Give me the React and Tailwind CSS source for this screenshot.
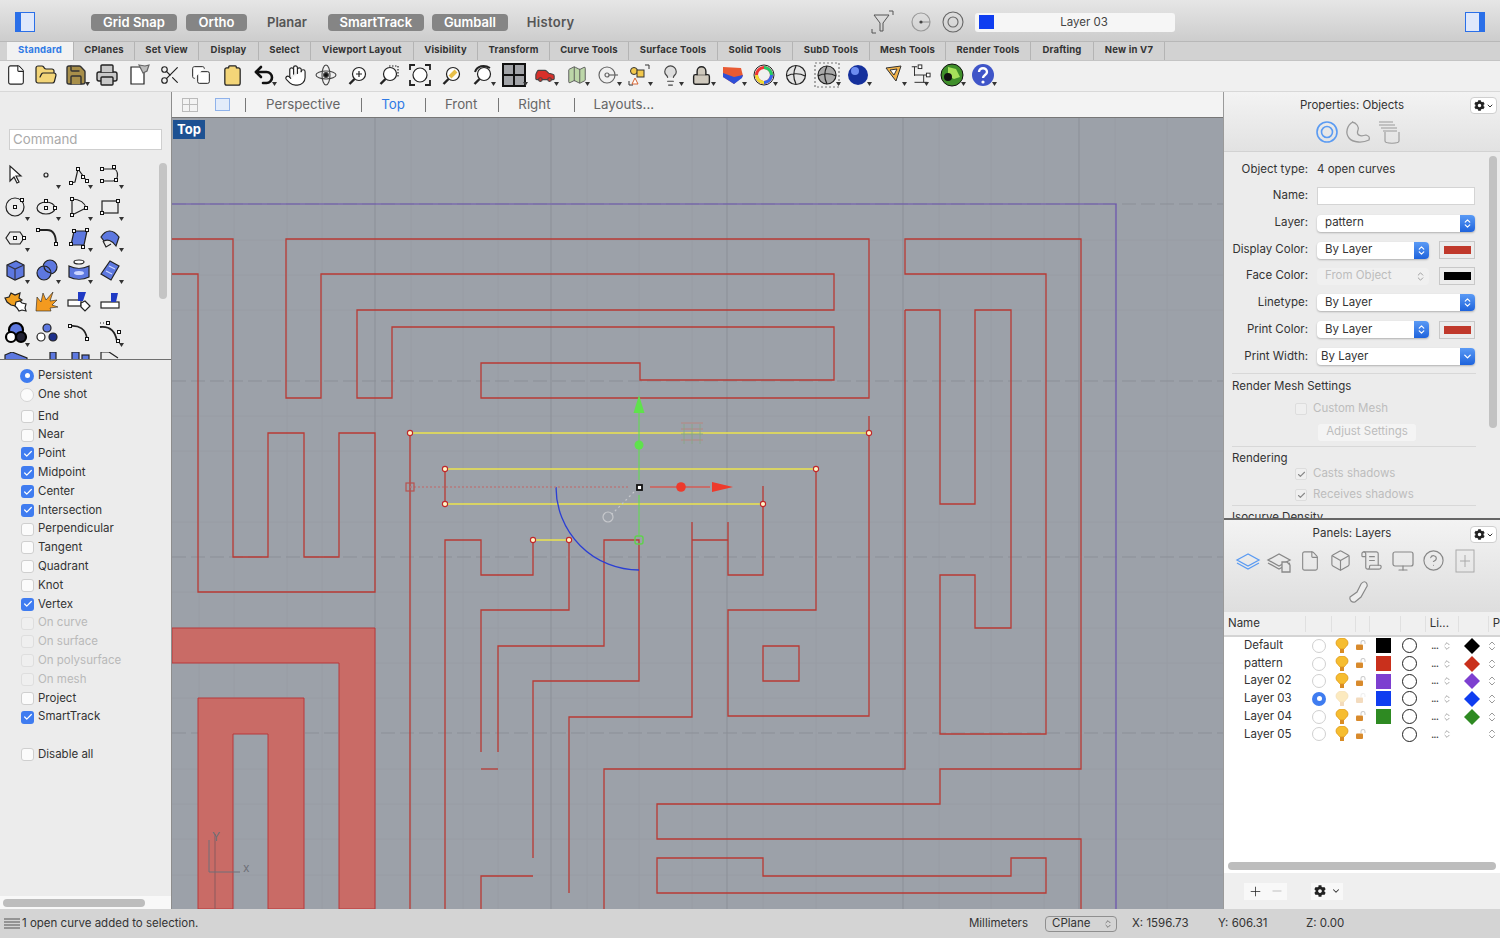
import {
  File, FolderOpen, Save, Printer, Scissors, Copy, Clipboard, Undo2, Hand, Lightbulb, Lock,
  Car, Map as MapIcon, Box, Monitor, CircleHelp, ScrollText, Plus, Minus, ChevronDown, Check, ChevronsUpDown,
} from "lucide-react";
import { FaCog } from "react-icons/fa";

const TABS = [
  ["Standard", "w-[67px]"], ["CPlanes", "w-[61px]"], ["Set View", "w-[64px]"], ["Display", "w-[60px]"],
  ["Select", "w-[52px]"], ["Viewport Layout", "w-[103px]"], ["Visibility", "w-[64px]"], ["Transform", "w-[72px]"],
  ["Curve Tools", "w-[79px]"], ["Surface Tools", "w-[89px]"], ["Solid Tools", "w-[75px]"], ["SubD Tools", "w-[77px]"],
  ["Mesh Tools", "w-[76px]"], ["Render Tools", "w-[85px]"], ["Drafting", "w-[63px]"], ["New in V7", "w-[71px]"],
];

const OSNAPS = [
  ["End", 0], ["Near", 0], ["Point", 1], ["Midpoint", 1], ["Center", 1], ["Intersection", 1], ["Perpendicular", 0],
  ["Tangent", 0], ["Quadrant", 0], ["Knot", 0], ["Vertex", 1], ["On curve", 2], ["On surface", 2], ["On polysurface", 2],
  ["On mesh", 2], ["Project", 0], ["SmartTrack", 1],
];

const LAYERS = [
  { name: "Default", color: "bg-[#000000]", fill: "#000000" },
  { name: "pattern", color: "bg-[#c9301c]", fill: "#c9301c" },
  { name: "Layer 02", color: "bg-[#7d3fd0]", fill: "#7d3fd0" },
  { name: "Layer 03", color: "bg-[#0f3df0]", fill: "#0f3df0", current: true },
  { name: "Layer 04", color: "bg-[#2e8a22]", fill: "#2e8a22" },
  { name: "Layer 05", color: "bg-transparent", fill: "transparent" },
];

function Flyout() {
  return (
    <svg className="absolute right-[2px] bottom-[2px]" width="5" height="4" viewBox="0 0 5 4">
      <path d="M0 0h5L2.5 4z" fill="#333" />
    </svg>
  );
}

function Tb({ children, fly, className = "w-[31.3px]" }) {
  return (
    <div className={`relative h-[26px] flex items-center justify-center shrink-0 ${className}`}>
      {children}
      {fly ? <Flyout /> : null}
    </div>
  );
}

// zoom tools share the same magnifier, handle pointing down-left
function Mag({ fill = "#fff", children }) {
  return (
    <svg width="24" height="24" viewBox="0 0 24 24" fill="none" stroke="#222" strokeWidth="1.2">
      <circle cx="13" cy="11" r="6.5" fill={fill} />
      <path d="M8.5 16L3.5 21" strokeWidth="2.4" />
      {children}
    </svg>
  );
}

function Pt({ x, y }) {
  return <rect x={x - 1.5} y={y - 1.5} width="3" height="3" fill="#fff" stroke="#111" strokeWidth="1" />;
}

function Tool({ children, fly }) {
  return (
    <div className="relative w-[31.5px] h-[31.5px] flex items-center justify-center">
      <svg width="24" height="24" viewBox="0 0 24 24" fill="none" stroke="#222" strokeWidth="1.2">
        {children}
      </svg>
      {fly ? <Flyout /> : null}
    </div>
  );
}

const BLUE = "#5d78e0";

const TOOLS = [
  [<path key="a" d="M6 3v15l4-4 3 6 2-1-3-6h5z" fill="#fff" />, 0],
  [<circle key="a" cx="11" cy="12" r="2" />, 1],
  [<g key="a"><path d="M4 20l4-1 3-13 8 11" /><Pt x={4} y={20} /><Pt x={11} y={6} /><Pt x={16} y={14} /><Pt x={20} y={18} /></g>, 1],
  [<g key="a"><path d="M4 6h11c6 0 6 12 0 12H4" /><Pt x={4} y={6} /><Pt x={16} y={4} /><Pt x={4} y={18} /><Pt x={18} y={17} /></g>, 1],
  [<g key="a"><circle cx="11" cy="12" r="9" /><Pt x={11} y={12} /><Pt x={18} y={5} /></g>, 1],
  [<g key="a"><ellipse cx="11" cy="13" rx="9" ry="6" /><Pt x={11} y={6} /><Pt x={11} y={13} /><Pt x={20} y={13} /></g>, 1],
  [<g key="a"><path d="M5 4c8 0 13 4 14 9L5 20z" /><Pt x={5} y={4} /><Pt x={19} y={13} /><Pt x={5} y={20} /></g>, 1],
  [<g key="a"><rect x="4" y="6" width="16" height="12" /><Pt x={20} y={6} /><Pt x={4} y={18} /></g>, 1],
  [<g key="a"><path d="M6 6h10l4 6-4 6H6l-4-6z" /><Pt x={11} y={12} /><Pt x={20} y={12} /></g>, 1],
  [<g key="a"><path d="M3 4h9c7 0 9 6 9 14" strokeWidth="1.8" /><Pt x={3} y={4} /><Pt x={21} y={18} /></g>, 0],
  [<g key="a"><path d="M7 5h13l-3 14H4z" fill={BLUE} /><Pt x={7} y={5} /><Pt x={20} y={4} /><Pt x={4} y={18} /><Pt x={16} y={21} /></g>, 1],
  [<g key="a"><path d="M3 11c5-8 12-8 18 0l-3 9C14 14 9 13 6 15z" fill={BLUE} /><path d="M5 15l3 6 5-3" /></g>, 1],
  [<g key="a"><path d="M3 7l9-4 8 4v11l-9 4-8-4z" fill={BLUE} /><path d="M3 7l8 4 9-4M11 11v11" stroke="#334" /></g>, 1],
  [<g key="a"><circle cx="15" cy="9" r="7" fill={BLUE} /><circle cx="9" cy="15" r="7" fill={BLUE} /><path d="M9 8c0 4 2 6 7 7" /></g>, 1],
  [<g key="a"><ellipse cx="12" cy="4" rx="5" ry="2" fill="#fff" /><path d="M2 8c6 3 14 3 20 0v11c-6 3-14 3-20 0z" fill={BLUE} /><ellipse cx="12" cy="15" rx="5" ry="2" fill="#cdd6ff" stroke="none" /></g>, 1],
  [<g key="a"><path d="M3 16L12 3l9 5-8 14z" fill={BLUE} /><path d="M8 13l6 3M11 8l6 3" stroke="#cdd6ff" /></g>, 1],
  [<g key="a"><path d="M1 9l4-1 2-4 4 2 5-2-1 5 3 2-4 3-2 3-5-1-4-3z" fill="#f0a020" /><path d="M12 13l4-1 2 2 4 1-1 4 1 3-4-1-3 1-2-3-2-2z" fill="#fff" /></g>, 0],
  [<path key="a" d="M1 22l1-14 4 5 2-9 3 7 7-8-3 9 7-1-5 5 6 2-8 1 1 3z" fill="#f39a1f" stroke="#222" strokeWidth=".6" />, 0],
  [<g key="a"><rect x="1" y="11" width="13" height="6" fill="#fff" /><path d="M11 3h8l-3 9h-5z" fill="#1f3ac4" stroke="none" /><path d="M14 14l4-2 5 5-5 5-4-4z" fill="#fff" /></g>, 0],
  [<g key="a"><rect x="3" y="13" width="18" height="6" fill="#fff" /><path d="M13 4h7l-2 9h-5z" fill="#1f3ac4" stroke="none" /></g>, 0],
  [<g key="a"><circle cx="12" cy="9" r="7" fill={BLUE} stroke="#000" strokeWidth="2.2" /><circle cx="7" cy="16" r="5" fill="#fff" stroke="#000" strokeWidth="2.2" /><circle cx="17" cy="16" r="5" fill="#223" stroke="#000" strokeWidth="2.2" /></g>, 1],
  [<g key="a"><circle cx="12" cy="7" r="4" fill={BLUE} /><circle cx="6" cy="16" r="4" fill="#fff" /><circle cx="18" cy="16" r="4" fill="#1d2f8a" /></g>, 0],
  [<g key="a"><path d="M3 5c9-1 16 3 17 13" strokeWidth="1.8" /><Pt x={3} y={5} /><Pt x={20} y={18} /></g>, 0],
  [<g key="a"><path d="M2 6c9-1 15 3 17 14" strokeWidth="1.8" /><path d="M2 2h10" strokeDasharray="1 2" /><Pt x={10} y={2} /><Pt x={21} y={11} /><Pt x={20} y={20} /></g>, 1],
  // last row is cut by the divider, only the tops show
  [<path key="a" d="M1 3l7-3 15 6v8H1z" fill={BLUE} />, 0],
  [<rect key="a" x="15" y="0" width="6" height="12" fill={BLUE} />, 0],
  [<g key="a"><rect x="5" y="0" width="7" height="12" fill={BLUE} /><rect x="15" y="3" width="7" height="9" fill={BLUE} /></g>, 0],
  [<path key="a" d="M3 0v12M3 0h8l9 6" fill="none" />, 0],
];

function CheckBox({ state }) {
  if (state === 1) {
    return (
      <span className="w-[13px] h-[13px] rounded-[3px] bg-[#3f7cf0] flex items-center justify-center shrink-0">
        <Check size={10} color="#fff" strokeWidth={3} />
      </span>
    );
  }
  if (state === 2) return <span className="w-[13px] h-[13px] rounded-[3px] bg-[#efefef] border border-[#dedede] shrink-0" />;
  return <span className="w-[13px] h-[13px] rounded-[3px] bg-[#fbfbfb] border border-[#cfcfcf] shrink-0" />;
}

function SnapRow({ label, state, className = "" }) {
  return (
    <div className={`h-[18.8px] flex items-center gap-[4px] pl-[21px] ${className}`}>
      <CheckBox state={state} />
      <span className={state === 2 ? "text-[#b9b9b9]" : "text-[#333]"}>{label}</span>
    </div>
  );
}

function Select({ label, width, dim, arrow, pl = "pl-[8px]" }) {
  return (
    <div className={`h-[17px] flex items-center justify-between rounded-[4px] shadow-[0_1px_2px_rgba(0,0,0,0.25)] ${width} ${dim ? "bg-[#f0f0f0] shadow-none" : "bg-white"}`}>
      <span className={`${pl} ${dim ? "text-[#bdbdbd]" : "text-[#333]"}`}>{label}</span>
      {dim ? (
        <ChevronsUpDown size={11} color="#999" className="mr-[3px]" />
      ) : (
        <span className="w-[15px] h-[17px] rounded-r-[4px] bg-gradient-to-b from-[#5a9af5] to-[#1e63dc] flex items-center justify-center">
          {arrow ? <ChevronDown size={11} color="#fff" strokeWidth={3} /> : <ChevronsUpDown size={11} color="#fff" strokeWidth={2.5} />}
        </span>
      )}
    </div>
  );
}

function Swatch({ color }) {
  return (
    <span className="ml-[10px] w-[36px] h-[18px] bg-[#ececec] border border-[#c8c8c8] flex items-center justify-center">
      <span className={`w-[27px] h-[8px] ${color}`} />
    </span>
  );
}

function PropRow({ label, h, children }) {
  return (
    <div className={`flex items-center ${h}`}>
      <span className="w-[84px] text-right text-[#333]">{label}</span>
      <div className="ml-[9px] flex items-center">{children}</div>
    </div>
  );
}

function GearBtn() {
  return (
    <span className="w-[27px] h-[17px] bg-white rounded-[4px] border border-[#cfcfcf] flex items-center justify-center gap-[1px]">
      <FaCog size={11} color="#222" />
      <ChevronDown size={8} color="#333" strokeWidth={3} />
    </span>
  );
}

function LayersIcon({ color, extra }) {
  return (
    <svg width="26" height="24" viewBox="0 0 26 24" fill="none" stroke={color} strokeWidth="1.3">
      <path d="M13 5L2 11l11 6 11-6z" />
      <path d="M2 14l11 6 11-6" />
      {extra ? <path d="M16 13h5l3 3v7h-8z" fill="#e8e8e8" /> : null}
    </svg>
  );
}

function Bulb() {
  return (
    <svg width="14" height="16" viewBox="0 0 14 16">
      <path d="M1 5a6 5 0 0 1 12 0c0 3-3 4-4 6H5C4 9 1 8 1 5z" fill="#f6bd30" stroke="#e09a1a" strokeWidth=".8" />
      <rect x="5" y="11" width="4" height="4" fill="#d98c24" />
    </svg>
  );
}

function OpenLock() {
  return (
    <svg width="11" height="11" viewBox="0 0 11 11" fill="none">
      <path d="M6 4V2.5a2 2 0 0 1 4 0V4" stroke="#cfcfcf" strokeWidth="1.1" />
      <rect x="1" y="4.5" width="7" height="5.5" rx="1" fill="#d88a2c" />
    </svg>
  );
}

function Mark({ x, y }) {
  return <circle cx={x} cy={y} r="2.6" fill="#fff6c8" stroke="#c0262a" strokeWidth="1.1" />;
}

// maze geometry, in page coordinates
const MAZE = [
  "M172 239H233V557H268V433H304V557H339V433H375V592H198V274H172",
  "M286 239H869V398H481V363H640V380H834V327H392V398H357V310H834V274H321V398H286Z",
  "M410 433V909",
  "M445 469V504",
  "M445 909V540H481V575H533V540",
  "M569 540V610H481V752",
  "M498 752V646H604V540H639V681H533V858",
  "M481 769H498",
  "M481 909V876H533",
  "M569 893V717H692V522",
  "M692 540H728",
  "M728 522V575H763V486",
  "M816 469V610H728V716H869V416",
  "M763 646H799V681H763Z",
  "M905 310H940V504H975V310H1011V628H975V575H940V734H1046V274H905V239H1081V769H940V804H657V839H1081V909",
  "M905 310V769H604V909",
  "M657 858H763V876H1011V858H1046V893H657Z",
];

function Viewport() {
  return (
    <svg className="block w-full h-full" viewBox="172 118 1051 791" preserveAspectRatio="none">
      <rect x="172" y="118" width="1051" height="791" fill="#9ca1a9" />
      {[199, 234, 287, 322, 411, 463, 498, 587, 639, 692, 763, 816, 939, 991, 1044, 1115, 1167].map((x) => (
        <path key={x} d={`M${x} 118V909`} stroke="#989ca4" strokeWidth="1" />
      ))}
      {[240, 275, 310, 416, 451, 522, 592, 628, 663, 698, 769, 804, 839, 875].map((y) => (
        <path key={y} d={`M172 ${y}H1223`} stroke="#989ca4" strokeWidth="1" />
      ))}
      {[375, 551, 727, 903, 1079].map((x) => (
        <path key={x} d={`M${x} 118V909`} stroke="#8b8f97" strokeWidth="1" />
      ))}
      {[204, 381, 557, 733].map((y) => (
        <path key={y} d={`M172 ${y}H1223`} stroke="#8b8f97" strokeWidth="1" strokeDasharray="14 5" />
      ))}
      <path d="M172 628H375V909H339V663H172Z" fill="#c96b66" stroke="#b8393a" strokeWidth="1" />
      <path d="M198 909V698H304V909H268V734H233V909Z" fill="#c96b66" stroke="#b8393a" strokeWidth="1" />
      <path d="M215 834V909" stroke="#8b5a5c" />
      <path d="M209 840V872H240" fill="none" stroke="#6e7078" strokeWidth="1" />
      <text x="212" y="841" fontSize="12" fill="#6e7078">Y</text>
      <text x="243" y="872" fontSize="12" fill="#6e7078">x</text>
      <path d="M172 204H1116V909" fill="none" stroke="#6a52b0" strokeWidth="1.2" />
      {MAZE.map((d) => (
        <path key={d} d={d} fill="none" stroke="#b83a34" strokeWidth="1.3" />
      ))}
      <path d="M410 433H869M445 469H816M445 504H763M533 540H569" stroke="#ece44e" strokeWidth="1.5" />
      <path d="M556 487A83 83 0 0 0 639 570" fill="none" stroke="#2b3fd4" strokeWidth="1.3" />
      <path d="M410 487H630" stroke="#b57a7c" strokeWidth="1.3" strokeDasharray="2 2" />
      <rect x="406" y="483" width="8" height="8" fill="none" stroke="#b8504e" strokeWidth="1.2" />
      <path d="M639 405V480M639 495V535" stroke="#5fe24c" strokeWidth="1" />
      <path d="M639 395l5.5 18h-11z" fill="#5fe24c" />
      <circle cx="639" cy="445" r="4.5" fill="#5fe24c" />
      <rect x="635" y="536" width="8" height="8" rx="2" fill="none" stroke="#5fd24c" strokeWidth="1.4" />
      <path d="M650 487H710" stroke="#ee3a2c" strokeWidth="1.2" />
      <circle cx="681" cy="487" r="4.8" fill="#ee3a2c" />
      <path d="M712 482l21 5-21 5z" fill="#ee3a2c" />
      <rect x="637" y="485" width="5" height="5" fill="#fff" stroke="#111" strokeWidth="1.8" />
      <path d="M634 492L612 514" stroke="#c6c8cc" strokeWidth="1.2" strokeDasharray="2 3" />
      <circle cx="608" cy="517" r="5" fill="none" stroke="#c6c8cc" strokeWidth="1.2" />
      <path d="M681 423H703M681 429H703M681 440H703" stroke="#b78680" strokeWidth="1" />
      <path d="M681 434H703M692 424V444M684 424V444M700 424V444" stroke="#86a884" strokeWidth=".8" />
      {[[410, 433], [869, 433], [445, 469], [816, 469], [445, 504], [763, 504], [533, 540], [569, 540]].map(([x, y]) => (
        <Mark key={`${x}-${y}`} x={x} y={y} />
      ))}
    </svg>
  );
}

export default function App() {
  return (
    <div className="w-[1500px] h-[938px] flex flex-col overflow-hidden bg-[#ececec] text-[11.5px] leading-none font-['Inter',sans-serif]">
      {/* title bar */}
      <div className="h-[41px] shrink-0 flex items-center pt-[3px] bg-gradient-to-b from-[#e6e6e6] to-[#cdcdcd] relative">
        <svg className="ml-[15px]" width="20" height="20" viewBox="0 0 20 20">
          <rect x=".5" y=".5" width="19" height="19" fill="#dfe8fb" stroke="#2a6fe8" />
          <rect x="0" y="0" width="6" height="20" fill="#2a6fe8" />
        </svg>
        <div className="ml-[56px] flex items-center font-semibold text-[13px]">
          <span className="w-[86px] h-[17px] rounded-[4px] bg-[#858585] text-white flex items-center justify-center">Grid Snap</span>
          <span className="ml-[9px] w-[61px] h-[17px] rounded-[4px] bg-[#858585] text-white flex items-center justify-center">Ortho</span>
          <span className="ml-[20px] text-[#555]">Planar</span>
          <span className="ml-[21px] w-[96px] h-[17px] rounded-[4px] bg-[#858585] text-white flex items-center justify-center">SmartTrack</span>
          <span className="ml-[8px] w-[76px] h-[17px] rounded-[4px] bg-[#858585] text-white flex items-center justify-center">Gumball</span>
          <span className="ml-[19px] text-[#555] tracking-[0.3px]">History</span>
        </div>
        <div className="ml-[296px] flex items-center">
          <svg width="24" height="24" viewBox="0 0 24 24" fill="none" stroke="#555" strokeWidth="1">
            <path d="M3 5h15l-6 8v8h-3v-8zM18 1h4v4M1 19v4h4" />
          </svg>
          <svg className="ml-[15px]" width="22" height="22" viewBox="0 0 22 22" fill="none" stroke="#999" strokeWidth="1.2">
            <circle cx="11" cy="11" r="9" />
            <path d="M11 11h9" />
            <circle cx="11" cy="11" r="1.6" fill="#444" stroke="none" />
          </svg>
          <svg className="ml-[10px]" width="22" height="22" viewBox="0 0 22 22" fill="none" stroke="#666" strokeWidth="1.1">
            <circle cx="11" cy="11" r="10" />
            <circle cx="11" cy="11" r="5" />
          </svg>
          <div className="ml-[11px] w-[200px] h-[19px] rounded-[3px] bg-[#f6f6f6] flex items-center">
            <span className="ml-[4px] w-[15px] h-[14px] bg-[#0f3df0]" />
            <span className="flex-1 text-center text-[#444] pt-[1px]">Layer 03</span>
          </div>
        </div>
        <svg className="absolute right-[15px] top-[12px]" width="20" height="20" viewBox="0 0 20 20">
          <rect x=".5" y=".5" width="19" height="19" fill="#dfe8fb" stroke="#2a6fe8" />
          <rect x="14" y="0" width="6" height="20" fill="#2a6fe8" />
        </svg>
      </div>

      {/* tabs */}
      <div className="h-[19px] shrink-0 flex pl-[7px] bg-[#d2d2d2] border-t border-[#b8b8b8] text-[9.5px] font-bold text-[#333] tracking-[0.2px]">
        {TABS.map(([t, w], i) => (
          <div
            key={t}
            className={`${w} flex items-center justify-center pb-[2px] border-r border-[#b4b4b4] ${i === 0 ? "bg-[#f2f2f2] text-[#2f7ae5]" : ""}`}
          >
            {t}
          </div>
        ))}
      </div>

      {/* standard toolbar */}
      <div className="h-[31px] shrink-0 flex items-center pb-[2px] bg-[#f0f0f0] border-t border-[#c4c4c4]">
        <Tb><File size={22} fill="#fff" strokeWidth={1.2} color="#222" /></Tb>
        <Tb className="w-[29px]"><FolderOpen size={24} fill="#f3d578" strokeWidth={1.2} color="#222" /></Tb>
        <Tb fly><Save size={24} fill="#a88f4a" strokeWidth={1.4} color="#333" /></Tb>
        <Tb><Printer size={24} fill="#c9c9c9" strokeWidth={1.4} color="#222" /></Tb>
        <Tb>
          <svg width="24" height="24" viewBox="0 0 24 24" fill="none" stroke="#222" strokeWidth="1.2">
            <path d="M4 4h9l4 4v13H4z" fill="#fff" />
            <path d="M12 2l6 1 4-1-2 6-4 2z" fill="#bbb" stroke="#666" />
          </svg>
        </Tb>
        <Tb><Scissors size={22} strokeWidth={1.3} color="#222" /></Tb>
        <Tb><Copy size={20} fill="#fff" strokeWidth={1.2} color="#222" /></Tb>
        <Tb><Clipboard size={23} fill="#f3d578" strokeWidth={1.3} color="#222" /></Tb>
        <Tb fly><Undo2 size={24} strokeWidth={2.6} color="#111" /></Tb>
        <Tb><Hand size={23} fill="#fff" strokeWidth={1.2} color="#222" /></Tb>
        <Tb>
          <svg width="24" height="24" viewBox="0 0 24 24" fill="none" stroke="#444" strokeWidth="1.1">
            <ellipse cx="12" cy="12" rx="10" ry="4" />
            <ellipse cx="12" cy="12" rx="4" ry="10" />
            <circle cx="12" cy="12" r="2.4" fill="#111" />
          </svg>
        </Tb>
        <Tb>
          <Mag>
            <path d="M10 11h6M13 8v6" />
          </Mag>
        </Tb>
        <Tb>
          <Mag>
            <path d="M12 3h9v11" strokeDasharray="1.5 1.5" />
          </Mag>
        </Tb>
        <Tb>
          <svg width="24" height="24" viewBox="0 0 24 24" fill="none" stroke="#222" strokeWidth="1.2">
            <circle cx="12" cy="12" r="7" fill="#fff" />
            <path d="M2 7V2h5M17 2h5v5M22 17v5h-5M7 22H2v-5" strokeWidth="1.8" />
          </svg>
        </Tb>
        <Tb>
          <Mag>
            <path d="M10 14l6-6" stroke="#e8c04a" strokeWidth="4" />
          </Mag>
        </Tb>
        <Tb fly>
          <Mag>
            <path d="M4 9c2-6 9-8 15-4" strokeWidth="2" />
          </Mag>
        </Tb>
        <Tb fly>
          <svg width="26" height="26" viewBox="0 0 26 26" stroke="#111" strokeWidth="2">
            <rect x="2" y="2" width="22" height="22" fill="#a2a4a8" />
            <path d="M13 2v22M2 13h22" />
          </svg>
        </Tb>
        <Tb fly><Car size={22} fill="#d8302a" strokeWidth={1.2} color="#444" /></Tb>
        <Tb fly><MapIcon size={22} fill="#bcd6a8" strokeWidth={1} color="#555" /></Tb>
        <Tb fly>
          <svg width="22" height="22" viewBox="0 0 22 22" fill="none" stroke="#666" strokeWidth="1.2"><circle cx="10" cy="11" r="8" /><circle cx="10" cy="11" r="2" /><path d="M12 11h9" /></svg>
        </Tb>
        <Tb fly>
          <svg width="24" height="24" viewBox="0 0 24 24" fill="none" stroke="#333"><circle cx="7" cy="8" r="3.5" fill="#f2c84c" /><rect x="10" y="7" width="7" height="7" fill="#f2c84c" /><path d="M8 15l3 6H5z" fill="#fff" stroke="#d4612e" /><path d="M18 2h4v4M2 18v4h4" /></svg>
        </Tb>
        <Tb fly><Lightbulb size={23} fill="#ddd" strokeWidth={1.2} color="#444" /></Tb>
        <Tb fly><Lock size={21} fill="#cfc9bd" strokeWidth={1.6} color="#222" /></Tb>
        <Tb fly>
          <svg width="24" height="24" viewBox="0 0 24 24"><path d="M2 4l18 1 2 8-9 8L2 14z" fill="#e85a33" /><path d="M2 10l11 4 9-2-1 3-8 6-11-7z" fill="#2d4fd8" /></svg>
        </Tb>
        <Tb fly>
          <svg width="24" height="24" viewBox="0 0 24 24" fill="none"><circle cx="12" cy="12" r="10" stroke="#222" /><circle cx="12" cy="12" r="7.5" stroke="#e33" strokeWidth="3" /><path d="M12 4.5a7.5 7.5 0 0 1 7.5 7.5" stroke="#2c6" strokeWidth="3" /><path d="M19.5 12a7.5 7.5 0 0 1-7.5 7.5" stroke="#36e" strokeWidth="3" /><path d="M12 19.5A7.5 7.5 0 0 1 4.5 12" stroke="#ed3" strokeWidth="3" /></svg>
        </Tb>
        <Tb>
          <svg width="22" height="22" viewBox="0 0 22 22" fill="#e4e4e4" stroke="#222" strokeWidth="1.2"><circle cx="11" cy="11" r="9.5" /><path d="M2 12c5-3 13-3 18 0M11 2c-3 6-3 12 0 18" fill="none" /></svg>
        </Tb>
        <Tb fly>
          <svg width="26" height="26" viewBox="0 0 26 26" fill="#aaa" stroke="#222" strokeWidth="1.2"><rect x="1" y="1" width="24" height="24" fill="none" stroke="#777" strokeDasharray="2 2" /><circle cx="13" cy="13" r="9" /><path d="M4 14c5-3 13-3 18 0M13 4c-3 6-3 12 0 18" fill="none" /></svg>
        </Tb>
        <Tb fly>
          <svg width="22" height="22" viewBox="0 0 22 22"><circle cx="11" cy="11" r="10" fill="#15309c" /><circle cx="8" cy="7" r="4" fill="#6d8cf0" /></svg>
        </Tb>
        <Tb fly className="w-[31.3px] ml-[4px]">
          <svg width="20" height="20" viewBox="0 0 20 20" stroke="#333"><path d="M2 3l15-2-5 15z" fill="#f2b34a" /><path d="M6 5l7-1-3 6z" fill="#fff" /></svg>
        </Tb>
        <Tb fly className="w-[22px]">
          <svg width="24" height="24" viewBox="0 0 24 24" fill="none" stroke="#222"><path d="M3 3h6M6 3v10M6 12h14M16 12v8M6 20h14" /><rect x="10" y="1" width="4" height="4" fill="#fff" /><rect x="19" y="10" width="4" height="4" fill="#fff" /></svg>
        </Tb>
        <Tb fly className="w-[31.3px] ml-[5px]">
          <svg width="24" height="24" viewBox="0 0 24 24"><circle cx="12" cy="12" r="11" fill="#3f8f2a" stroke="#111" /><path d="M8 4l8 2 4 8-6 2-6-3z" fill="#a6e05a" /><circle cx="8" cy="14" r="4" fill="#111" /></svg>
        </Tb>
        <Tb fly>
          <svg width="24" height="24" viewBox="0 0 24 24"><circle cx="12" cy="12" r="11" fill="#3f55c8" /><path d="M8 9c0-5 8-5 8 0 0 3-4 3-4 6" fill="none" stroke="#fff" strokeWidth="2.4" /><circle cx="12" cy="19" r="1.6" fill="#fff" /></svg>
        </Tb>
      </div>

      {/* main */}
      <div className="flex-1 min-h-0 flex border-t border-[#d8d8d8]">
        {/* left sidebar */}
        <div className="w-[172px] shrink-0 flex flex-col border-r border-[#8d8d8d] bg-[#ececec]">
          <div className="h-[268px] shrink-0 relative overflow-hidden border-b border-[#6f6f6f]">
            <div className="mt-[37px] ml-[9px] w-[153px] h-[21px] bg-white border border-[#cfcfcf] flex items-center pl-[3px] pt-[1px] text-[13.3px] text-[#aaa]">Command</div>
            <div className="mt-[9.5px] grid grid-cols-[repeat(4,31.5px)] w-fit">
              {TOOLS.map(([icon, fly], i) => (
                <Tool key={i} fly={fly}>{icon}</Tool>
              ))}
            </div>
            <div className="absolute right-[4px] top-[71px] w-[8px] h-[136px] rounded-[4px] bg-[#c4c4c4]" />
          </div>
          <div className="flex-1 min-h-0 flex flex-col pt-[6px]">
            <div className="h-[19px] flex items-center gap-[4px] pl-[20px]">
              <span className="w-[14px] h-[14px] rounded-full bg-[#3f7cf0] flex items-center justify-center"><span className="w-[5px] h-[5px] rounded-full bg-white" /></span>
              <span className="text-[#333]">Persistent</span>
            </div>
            <div className="h-[19px] flex items-center gap-[4px] pl-[20px] mb-[3px]">
              <span className="w-[14px] h-[14px] rounded-full bg-[#fbfbfb] border border-[#d5d5d5]" />
              <span className="text-[#333]">One shot</span>
            </div>
            {OSNAPS.map(([l, s]) => (
              <SnapRow key={l} label={l} state={s} />
            ))}
            <SnapRow label="Disable all" state={0} className="mt-[18.8px]" />
            <div className="mt-auto h-[13px] bg-[#f8f8f8] flex items-center pl-[3px]">
              <span className="w-[142px] h-[8px] rounded-[4px] bg-[#bdbdbd]" />
            </div>
          </div>
        </div>

        {/* viewport */}
        <div className="flex-1 min-w-0 flex flex-col">
          <div className="h-[26px] shrink-0 bg-[#f3f3f3] border-b border-[#777] flex items-center text-[13.3px] text-[#666]">
            <span className="ml-[10px] w-[16px] h-[14px] border border-[#bbb] grid grid-cols-2 grid-rows-2">
              <span className="border-r border-b border-[#bbb]" /><span className="border-b border-[#bbb]" />
              <span className="border-r border-[#bbb]" /><span />
            </span>
            <span className="ml-[17px] w-[15px] h-[13px] border border-[#8fb2ea] bg-[#e3ecfa]" />
            <span className="ml-[15px] w-px h-[14px] bg-[#777]" />
            <span className="ml-[20px]">Perspective</span>
            <span className="ml-[21px] w-px h-[14px] bg-[#777]" />
            <span className="ml-[19px] text-[#2f7ae5]">Top</span>
            <span className="ml-[20px] w-px h-[14px] bg-[#777]" />
            <span className="ml-[19px]">Front</span>
            <span className="ml-[21px] w-px h-[14px] bg-[#777]" />
            <span className="ml-[19px]">Right</span>
            <span className="ml-[23px] w-px h-[14px] bg-[#777]" />
            <span className="ml-[19px]">Layouts...</span>
          </div>
          <div className="flex-1 min-h-0 relative">
            <Viewport />
            <span className="absolute left-[1px] top-[2px] w-[32px] h-[19px] bg-[#1d5192] text-white font-bold text-[13px] flex items-center justify-center">Top</span>
          </div>
        </div>

        {/* right panels */}
        <div className="w-[277px] shrink-0 flex flex-col border-l border-[#9a9a9a]">
          <div className="h-[428px] shrink-0 flex flex-col overflow-hidden border-b-2 border-[#666]">
            <div className="h-[60px] shrink-0 relative bg-gradient-to-b from-[#f3f3f3] to-[#e2e2e2] border-b border-[#d2d2d2]">
              <div className="pt-[8px] text-center text-[#333] pr-[20px]">Properties: Objects</div>
              <span className="absolute right-[3px] top-[5px]"><GearBtn /></span>
              <div className="mt-[8px] flex items-center justify-center gap-[6px] pr-[6px]">
                <svg width="24" height="24" viewBox="0 0 24 24" fill="none" stroke="#5b9bf2" strokeWidth="1.6"><circle cx="12" cy="12" r="10" /><circle cx="12" cy="12" r="5.5" /></svg>
                <svg width="26" height="24" viewBox="0 0 26 24" fill="none" stroke="#9a9a9a" strokeWidth="1.3"><path d="M8 2C2 5 0 13 4 18c4 5 14 5 20 2 1-3 0-4-3-5-6 2-10 0-8-5 1-3-1-7-6-8z" /></svg>
                <svg width="26" height="24" viewBox="0 0 26 24" fill="none" stroke="#9a9a9a" strokeWidth="1.1"><path d="M2 2h14M2 5h16M4 8h16M6 11h14" /><path d="M8 12v9c0 3 14 3 14 0v-9" /></svg>
              </div>
            </div>
            <div className="flex-1 min-h-0 relative overflow-hidden">
              <div className="w-[252px] pt-[5px]">
                <PropRow label="Object type:" h="h-[26px]"><span className="text-[#333]">4 open curves</span></PropRow>
                <PropRow label="Name:" h="h-[26px]"><span className="w-[158px] h-[18px] bg-white border border-[#d4d4d4]" /></PropRow>
                <PropRow label="Layer:" h="h-[28px]"><Select label="pattern" width="w-[158px]" /></PropRow>
                <PropRow label="Display Color:" h="h-[26px]"><Select label="By Layer" width="w-[112px]" /><Swatch color="bg-[#c0392b]" /></PropRow>
                <PropRow label="Face Color:" h="h-[26px]"><Select label="From Object" width="w-[112px]" dim /><Swatch color="bg-[#000000]" /></PropRow>
                <PropRow label="Linetype:" h="h-[27px]"><Select label="By Layer" width="w-[158px]" /></PropRow>
                <PropRow label="Print Color:" h="h-[27px]"><Select label="By Layer" width="w-[112px]" /><Swatch color="bg-[#c0392b]" /></PropRow>
                <PropRow label="Print Width:" h="h-[27px]"><Select label="By Layer" width="w-[158px]" arrow pl="pl-[4px]" /></PropRow>
                <div className="ml-[8px] mt-[3px] border-t border-[#d8d8d8] pt-[7px] text-[#333]">Render Mesh Settings</div>
                <div className="ml-[71px] mt-[9px] h-[14px] flex items-center gap-[6px] text-[#bdbdbd]">
                  <span className="w-[12px] h-[12px] rounded-[2px] bg-[#efefef] border border-[#ddd]" />Custom Mesh
                </div>
                <div className="ml-[94px] mt-[8px] w-[98px] h-[17px] bg-[#f4f4f4] rounded-[3px] text-[#bdbdbd] flex items-center justify-center">Adjust Settings</div>
                <div className="ml-[8px] mt-[5px] border-t border-[#d8d8d8] pt-[6px] text-[#333]">Rendering</div>
                <div className="ml-[71px] mt-[3px] h-[14px] flex items-center gap-[6px] text-[#bdbdbd]">
                  <span className="w-[12px] h-[12px] rounded-[2px] bg-[#efefef] border border-[#ddd] flex items-center justify-center"><Check size={9} color="#888" strokeWidth={3} /></span>Casts shadows
                </div>
                <div className="ml-[71px] mt-[7px] h-[14px] flex items-center gap-[6px] text-[#bdbdbd]">
                  <span className="w-[12px] h-[12px] rounded-[2px] bg-[#efefef] border border-[#ddd] flex items-center justify-center"><Check size={9} color="#888" strokeWidth={3} /></span>Receives shadows
                </div>
                <div className="ml-[8px] mt-[3px] border-t border-[#d8d8d8] pt-[6px] text-[#333]">Isocurve Density</div>
              </div>
              <div className="absolute right-[3px] top-[4px] w-[8px] h-[272px] rounded-[4px] bg-[#c2c2c2]" />
            </div>
          </div>

          <div className="flex-1 min-h-0 flex flex-col">
            <div className="h-[92px] shrink-0 relative bg-gradient-to-b from-[#f3f3f3] to-[#dedede]">
              <div className="pt-[8px] text-center text-[#333] pr-[20px]">Panels: Layers</div>
              <span className="absolute right-[3px] top-[6px]"><GearBtn /></span>
              <div className="mt-[9px] pl-[8px] flex items-center">
                <span className="w-[31px] flex justify-center"><LayersIcon color="#5b9bf2" /></span>
                <span className="w-[31px] flex justify-center"><LayersIcon color="#888" extra /></span>
                <span className="w-[31px] flex justify-center"><File size={22} color="#888" strokeWidth={1.2} /></span>
                <span className="w-[31px] flex justify-center"><Box size={23} color="#888" strokeWidth={1.2} /></span>
                <span className="w-[31px] flex justify-center"><ScrollText size={23} color="#888" strokeWidth={1.2} /></span>
                <span className="w-[31px] flex justify-center"><Monitor size={24} color="#888" strokeWidth={1.2} /></span>
                <span className="w-[31px] flex justify-center"><CircleHelp size={23} color="#888" strokeWidth={1.2} /></span>
                <span className="w-[31px] flex justify-center">
                  <svg width="20" height="24" viewBox="0 0 20 24" fill="none" stroke="#aaa"><rect x="1" y="1" width="18" height="22" /><path d="M10 6v12M5 12h10" /></svg>
                </span>
              </div>
              <div className="mt-[7px] flex justify-center pr-[6px]">
                <svg width="24" height="24" viewBox="0 0 24 24" fill="#eee" stroke="#888" strokeWidth="1.2"><path d="M3 17l7-5 4-8c2-3 5-3 6 0 1 2 0 3-1 4l-5 9-6 5c-3 1-6-2-5-5z" /></svg>
              </div>
            </div>
            <div className="h-[25px] shrink-0 bg-[#f0f0f0] border-b-2 border-[#d4d4d4] flex items-center text-[#333]">
              <span className="w-[82px] pl-[4px] border-r border-[#e0e0e0] h-[16px] flex items-center">Name</span>
              <span className="w-[26px] h-[16px] border-r border-[#e0e0e0]" />
              <span className="w-[24px] h-[16px] border-r border-[#e0e0e0]" />
              <span className="w-[14px] h-[16px] border-r border-[#e0e0e0]" />
              <span className="w-[31px] h-[16px] border-r border-[#e0e0e0]" />
              <span className="w-[25px] h-[16px] border-r border-[#e0e0e0]" />
              <span className="w-[33px] h-[16px] border-r border-[#e0e0e0] pl-[4px] flex items-center">Li...</span>
              <span className="w-[30px] h-[16px] border-r border-[#e0e0e0]" />
              <span className="pl-[4px]">P</span>
            </div>
            <div className="flex-1 min-h-0 bg-white">
              {LAYERS.map((l) => (
                <div key={l.name} className="h-[17.7px] flex items-center text-[#333]">
                  <span className="w-[84px] pl-[20px]">{l.name}</span>
                  <span className="w-[22px] flex justify-center">
                    {l.current ? (
                      <span className="w-[14px] h-[14px] rounded-full bg-[#3f7cf0] flex items-center justify-center"><span className="w-[5px] h-[5px] rounded-full bg-white" /></span>
                    ) : (
                      <span className="w-[14px] h-[14px] rounded-full border border-[#d0d0d0]" />
                    )}
                  </span>
                  <span className={`w-[24px] flex justify-center ${l.current ? "opacity-30" : ""}`}>
                    <Bulb />
                  </span>
                  <span className={`w-[12px] flex justify-center ${l.current ? "opacity-30" : ""}`}>
                    <OpenLock />
                  </span>
                  <span className="w-[34px] flex justify-center"><span className={`w-[15px] h-[15px] ${l.color}`} /></span>
                  <span className="w-[18px] flex justify-center"><span className="w-[15px] h-[15px] rounded-full border border-[#222]" /></span>
                  <span className="w-[24px] pl-[13px] text-[#444] tracking-[-1px]">...</span>
                  <span className="w-[10px] flex justify-center"><ChevronsUpDown size={12} color="#777" strokeWidth={1.5} /></span>
                  <span className="ml-[8px] w-[24px] flex justify-center">
                    <svg width="16" height="16" viewBox="0 0 16 16"><path d="M8 0l8 8-8 8-8-8z" fill={l.fill} /></svg>
                  </span>
                  <span className="w-[16px] flex justify-center"><ChevronsUpDown size={12} color="#777" strokeWidth={1.5} /></span>
                </div>
              ))}
            </div>
            <div className="h-[14px] shrink-0 bg-white flex items-center justify-center">
              <span className="w-[268px] h-[8px] rounded-[4px] bg-[#bdbdbd]" />
            </div>
            <div className="h-[36px] shrink-0 bg-[#efefef] flex items-center pl-[20px]">
              <span className="w-[22px] h-[17px] bg-[#f8f8f8] flex items-center justify-center"><Plus size={15} color="#222" strokeWidth={1.2} /></span>
              <span className="w-[21px] h-[17px] bg-[#f8f8f8] flex items-center justify-center"><Minus size={14} color="#aaa" strokeWidth={1.2} /></span>
              <span className="ml-[24px] w-[32px] h-[17px] bg-[#f8f8f8] flex items-center justify-center gap-[5px]">
                <FaCog size={12} color="#222" />
                <ChevronDown size={10} color="#333" strokeWidth={2.5} />
              </span>
            </div>
          </div>
        </div>
      </div>

      {/* status bar */}
      <div className="h-[29px] shrink-0 bg-[#d4d4d4] flex items-center pt-[1px] text-[#333]">
        <svg className="ml-[4px]" width="16" height="14" viewBox="0 0 16 14" stroke="#555" strokeWidth="1"><path d="M0 2h16M0 5h16M0 8h16M0 11h16" /></svg>
        <span className="ml-[2px]">1 open curve added to selection.</span>
        <span className="ml-auto">Millimeters</span>
        <span className="ml-[17px] w-[72px] h-[16px] rounded-[4px] border border-[#8f8f8f] flex items-center justify-between pl-[6px] pr-[3px]">
          CPlane
          <ChevronsUpDown size={10} color="#666" />
        </span>
        <span className="ml-[15px] w-[86px]">X: 1596.73</span>
        <span className="w-[88px]">Y: 606.31</span>
        <span className="w-[194px]">Z: 0.00</span>
      </div>
    </div>
  );
}
